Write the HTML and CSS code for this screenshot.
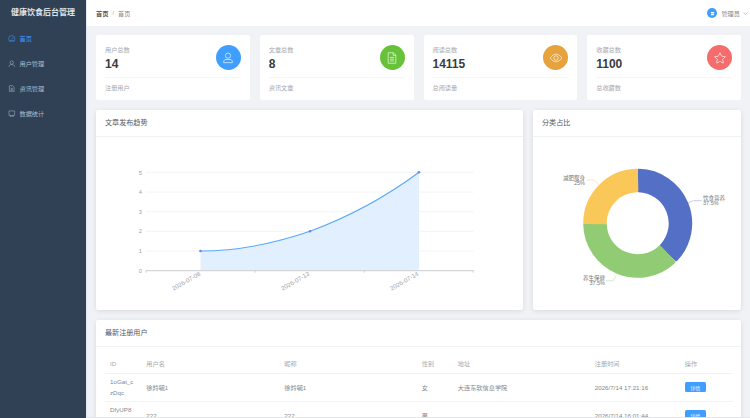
FILE: index.html
```html
<!DOCTYPE html>
<html lang="zh">
<head>
<meta charset="utf-8">
<title>健康饮食后台管理</title>
<link rel="stylesheet" href="styles.css">
</head>
<body>
<div class="app">
  <aside class="sidebar">
    <div class="logo">健康饮食后台管理</div>
    <nav class="menu">
      <a class="item active">
        <svg class="mi" viewBox="0 0 16 16"><circle cx="8" cy="8" r="6.8"/><path d="M8 9.5 11 5M3.5 11.5h9"/></svg>
        <span>首页</span></a>
      <a class="item">
        <svg class="mi" viewBox="0 0 16 16"><circle cx="8" cy="5.5" r="3.6"/><path d="M2 14.5c.5-3.5 3-5 6-5s5.500 1.500 6 5"/></svg>
        <span>用户管理</span></a>
      <a class="item">
        <svg class="mi" viewBox="0 0 16 16"><path d="M3 1.500h7l3 3v10H3zM5.500 7h5M5.500 9.500h5M5.500 12h5"/></svg>
        <span>资讯管理</span></a>
      <a class="item">
        <svg class="mi" viewBox="0 0 16 16"><path d="M2 2h12v9.500H2zM5 15l1-3.500M11 15l-1-3.500M4 15h8"/></svg>
        <span>数据统计</span></a>
    </nav>
  </aside>
  <div class="main">
    <header class="topbar">
      <div class="crumbs"><b>首页</b><i>/</i><span>首页</span></div>
      <div class="user">
        <span class="avatar"><svg viewBox="0 0 12 12"><path d="M3 3.500h6v1.500H3zM3.500 6h5v3h-5z"/></svg></span>
        <span>管理员</span>
        <svg class="chev" viewBox="0 0 10 6"><path d="M1 1l4 4 4-4"/></svg>
      </div>
    </header>
    <div class="content">
      <section class="stats">
        <div class="card stat">
          <div class="stat-top">
            <div><div class="stat-label">用户总数</div><div class="stat-num">14</div></div>
            <span class="circle blue"><svg viewBox="0 0 24 24"><circle cx="12" cy="8" r="4.500"/><path d="M4.500 20v-1.500c0-2.500 2-4 4-4h7c2 0 4 1.500 4 4V20z"/></svg></span>
          </div>
          <div class="stat-foot">注册用户</div>
        </div>
        <div class="card stat">
          <div class="stat-top">
            <div><div class="stat-label">文章总数</div><div class="stat-num">8</div></div>
            <span class="circle green"><svg viewBox="0 0 24 24"><path d="M5.500 3h9l4 4v14h-13zM14 3v4.500h4.500M8.500 11h7M8.500 14h7M8.500 17h7"/></svg></span>
          </div>
          <div class="stat-foot">资讯文章</div>
        </div>
        <div class="card stat">
          <div class="stat-top">
            <div><div class="stat-label">阅读总数</div><div class="stat-num">14115</div></div>
            <span class="circle orange"><svg viewBox="0 0 24 24"><path d="M2 12c3-4.500 6.500-6.500 10-6.500s7 2 10 6.500c-3 4.500-6.500 6.500-10 6.500S5 16.500 2 12z"/><circle cx="12" cy="12" r="3.800"/></svg></span>
          </div>
          <div class="stat-foot">总阅读量</div>
        </div>
        <div class="card stat">
          <div class="stat-top">
            <div><div class="stat-label">收藏总数</div><div class="stat-num">1100</div></div>
            <span class="circle red"><svg viewBox="0 0 24 24"><path d="M12 3l2.800 5.900 6.400.9-4.600 4.500 1.100 6.400L12 17.700l-5.700 3 1.100-6.400L2.800 9.800l6.400-.9z"/></svg></span>
          </div>
          <div class="stat-foot">总收藏数</div>
        </div>
      </section>

      <section class="charts">
        <div class="card raised">
          <div class="card-head">文章发布趋势</div>
          <svg class="chart" viewBox="96 137 427 173">
            <g class="grid">
              <path d="M145.700 172.300H473.600M145.700 192H473.600M145.700 211.700H473.600M145.700 231.300H473.600M145.700 251H473.600"/>
            </g>
            <path class="area" d="M200.500 251C237 251 273 244 310 231.300C346 218 383 199 419 172.300V270.700H200.500Z"/>
            <path class="line" d="M200.500 251C237 251 273 244 310 231.300C346 218 383 199 419 172.300"/>
            <path class="axis" d="M145.700 270.700H473.600"/>
            <path class="ticks" d="M146 270.700v2M255 270.700v2M364.300 270.700v2M473.300 270.700v2"/>
            <g class="pts"><circle cx="200.500" cy="251" r="1.300"/><circle cx="310" cy="231.300" r="1.300"/><circle cx="419" cy="172.300" r="1.300"/></g>
            <g class="ylab">
              <text x="142" y="174.500">5</text><text x="142" y="194">4</text><text x="142" y="213.700">3</text><text x="142" y="233.300">2</text><text x="142" y="253">1</text><text x="142" y="272.500">0</text>
            </g>
            <g class="xlab">
              <text transform="translate(201 275) rotate(-30)">2026-07-08</text>
              <text transform="translate(310 275) rotate(-30)">2026-07-13</text>
              <text transform="translate(419 275) rotate(-30)">2026-07-14</text>
            </g>
          </svg>
        </div>
        <div class="card raised">
          <div class="card-head">分类占比</div>
          <svg class="chart" viewBox="533 137 208 173">
            <g transform="translate(637.700 223.300)">
              <path class="seg s1" d="M1.390-52.980A53 53 0 0 1 38.450 36.480L23.570 22.370A32.500 32.500 0 0 0 .85-32.490Z"/>
              <path class="seg s2" d="M36.150 38.760A53 53 0 0 1-52.990 .92L-32.500 .57A32.500 32.500 0 0 0 22.170 23.770Z"/>
              <path class="seg s3" d="M-52.990-.92A53 53 0 0 1-1.390-52.980L-.85-32.490A32.500 32.500 0 0 0-32.500-.57Z"/>
            </g>
            <path class="lead l1" d="M688.300 202.700L693.300 200.700H701.700"/>
            <path class="lead l2" d="M616 276L613.300 280.700H606"/>
            <path class="lead l3" d="M598.300 184.300L594.300 180H586.700"/>
            <g class="plab">
              <text x="703" y="199.500">饮食营养</text><text x="703" y="205.300">37.5%</text>
              <text class="end" x="605" y="279.500">养生保健</text><text class="end" x="605" y="285">37.5%</text>
              <text class="end" x="585" y="179.500">减肥瘦身</text><text class="end" x="585" y="185">25%</text>
            </g>
          </svg>
        </div>
      </section>

      <section class="card raised">
        <div class="card-head">最新注册用户</div>
        <div class="table-wrap">
          <table>
            <colgroup><col class="c1"><col class="c2"><col class="c3"><col class="c4"><col class="c5"><col class="c6"><col class="c7"></colgroup>
            <thead><tr><th>ID</th><th>用户名</th><th>昵称</th><th>性别</th><th>地址</th><th>注册时间</th><th>操作</th></tr></thead>
            <tbody>
              <tr><td>1oGat_c<br>zDqc</td><td>徐羚毓1</td><td>徐羚毓1</td><td>女</td><td>大连东软信息学院</td><td>2026/7/14 17:21:16</td><td><button class="btn">详情</button></td></tr>
              <tr><td>DfyUP8<br>x1Yq</td><td>222</td><td>222</td><td>男</td><td></td><td>2026/7/14 16:01:44</td><td><button class="btn">详情</button></td></tr>
            </tbody>
          </table>
        </div>
      </section>
    </div>
  </div>
</div>
</body>
</html>
```

FILE: styles.css
```css
* { box-sizing: border-box; }
html, body { margin: 0; height: 100%; overflow: hidden; }
body {
  font-family: "Liberation Sans", "Noto Sans CJK SC", sans-serif;
  font-size: 6.2px;
  color: #606266;
  background: #f0f2f5;
}
.app { display: flex; height: 418px; }

.sidebar { width: 87px; flex: none; background: #304156; border-right: 1px solid #e4e7ed; }
.logo {
  height: 26px; line-height: 26px; text-align: center;
  color: #dfe3e8; font-size: 8px; font-weight: 700;
}
.menu { display: flex; flex-direction: column; }
.item {
  height: 25px; display: flex; align-items: center; gap: 4px; padding-left: 8px;
  color: #aebccb;
}
.item.active { color: #409eff; }
.mi { width: 7.5px; height: 7.5px; fill: none; stroke: currentColor; stroke-width: 1.1; }

.main { flex: 1; min-width: 0; display: flex; flex-direction: column; border-bottom: 1px solid #e2e4e8; }
.topbar {
  height: 26px; flex: none; background: #fff; display: flex; align-items: center;
  justify-content: space-between; padding: 0 2px 0 9px;
}
.crumbs { display: flex; gap: 3px; color: #85878c; }
.crumbs b { color: #55575c; font-weight: 700; }
.crumbs i { font-style: normal; color: #a8abb2; padding: 0 1px; }
.user { display: flex; align-items: center; gap: 3px; color: #85878c; }
.avatar {
  width: 10.500px; height: 10.500px; border-radius: 50%; background: #409eff; margin-right: 1px;
  display: flex; align-items: center; justify-content: center;
}
.avatar svg { width: 7px; height: 7px; fill: #fff; }
.chev { width: 5px; height: 3px; fill: none; stroke: #909399; stroke-width: 1; }

.content { flex: 1; min-height: 0; overflow: hidden; padding: 9px 9px 0; display: flex; flex-direction: column; gap: 10px; }
.card { background: #fff; border-radius: 2px; }
.raised { box-shadow: 0 1px 5px rgba(0, 0, 0, .1); }

.stats { display: grid; grid-template-columns: repeat(4, 1fr); gap: 10px; flex: none; }
.stat { height: 65px; padding: 10px 9px 0; }
.stat-top { display: flex; justify-content: space-between; border-bottom: 1px solid #f4f5f7; height: 33px; }
.stat-label { color: #a6a9ad; line-height: 7px; margin-top: .500px; }
.stat-num { color: #3a3b3e; font-size: 12px; font-weight: 700; line-height: 14px; margin-top: 4px; }
.circle {
  width: 25px; height: 25px; border-radius: 50%; display: flex; align-items: center; justify-content: center;
}
.circle svg { width: 14px; height: 14px; fill: none; stroke: #fff; stroke-width: 1.200; opacity: .9; }
.blue { background: #409eff; }
.green { background: #67c23a; }
.orange { background: #e6a23c; }
.red { background: #f56c6c; }
.stat-foot { color: #a6a9ad; margin-top: 6px; line-height: 7px; }

.charts { display: grid; grid-template-columns: 427px 208px; gap: 10px; flex: none; }
.charts .card { height: 200px; }
.card-head {
  height: 27px; line-height: 27px; padding: 0 9px; font-size: 7.100px; color: #55575c;
  border-bottom: 1px solid #eff1f5;
}
.chart { display: block; width: 100%; height: 173px; font-family: "Liberation Sans", "Noto Sans CJK SC", sans-serif; }
.grid path { stroke: #f3f4f6; stroke-width: 1; fill: none; }
.area { fill: #e1effe; }
.line { fill: none; stroke: #5aa9fa; stroke-width: 1.100; }
.axis { stroke: #d4d6da; stroke-width: 1.200; fill: none; }
.ticks { stroke: #b4b7bc; stroke-width: .6; fill: none; }
.pts circle { fill: #6c8ad8; }
.ylab text { font-size: 5.800px; fill: #a0a2a7; text-anchor: end; }
.xlab text { font-size: 6.200px; fill: #a0a2a7; text-anchor: end; }
.seg { stroke-width: 3; stroke-linejoin: round; }
.s1 { fill: #5470c6; stroke: #5470c6; }
.s2 { fill: #91cc75; stroke: #91cc75; }
.s3 { fill: #fac858; stroke: #fac858; }
.lead { fill: none; stroke-width: .7; }
.l1 { stroke: #a9b8e3; }
.l2 { stroke: #c8e5ba; }
.l3 { stroke: #fce3ab; }
.plab text { font-size: 5.500px; fill: #77797d; }
.plab .end { text-anchor: end; }

.table-wrap { padding: 7px 8px 0 9px; }
table { width: 100%; table-layout: fixed; border-collapse: collapse; }
.c1 { width: 36.300px; } .c2 { width: 138px; } .c3 { width: 137.500px; } .c4 { width: 36px; }
.c5 { width: 137px; } .c6 { width: 90px; } .c7 { width: 53.200px; }
th, td { padding: 0 5px; text-align: left; font-weight: 400; border-bottom: 1px solid #f0f2f5; line-height: 11px; }
th { height: 19px; color: #a6a9ad; }
td { height: 28px; color: #85878c; }
.btn {
  display: block; width: 21px; height: 10.500px; padding: 0; border: 0; border-radius: 1.500px;
  background: #409eff; color: #e8f3ff; font: 5px "Liberation Sans", "Noto Sans CJK SC", sans-serif;
}
```
